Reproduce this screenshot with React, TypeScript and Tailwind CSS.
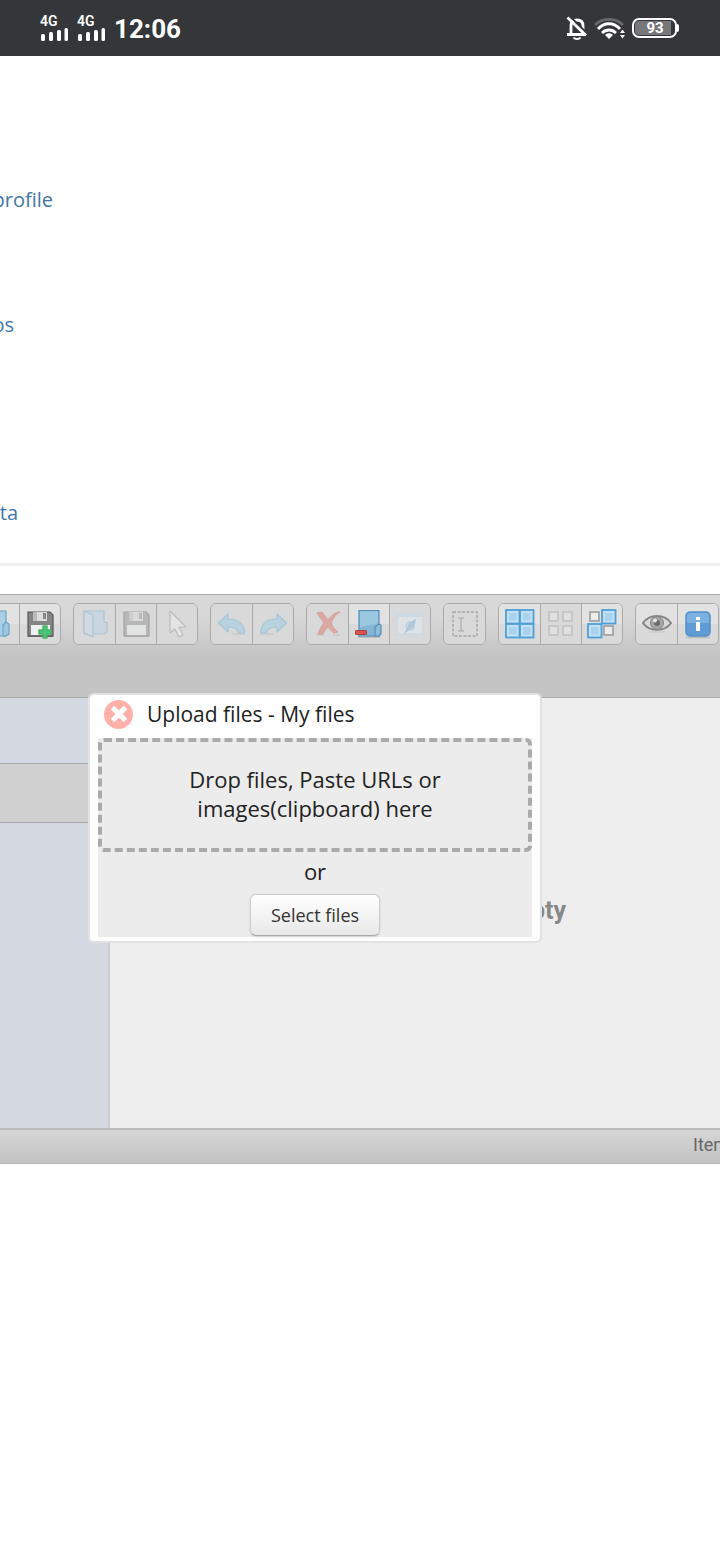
import type { ReactNode } from "react";
import clsx from "clsx";

interface Tool {
  label: string;
  icon: ReactNode;
  disabled?: boolean;
}

const Icon = ({ children }: { children: ReactNode }) => (
  <svg viewBox="0 0 32 32" className="h-8 w-8" fill="none" aria-hidden="true">
    {children}
  </svg>
);

const FolderIcon = () => (
  <Icon>
    <path d="M5 3h20v11l3 1v9l-3 2H5z" fill="#b0d2e8" stroke="#6ea3c6" strokeWidth="1.2" />
    <path d="M5 3l9 4v22l-9-4z" fill="#c0dcee" stroke="#6ea3c6" strokeWidth="1.2" strokeLinejoin="round" />
  </Icon>
);

const FolderEdgeIcon = () => (
  <Icon>
    <path d="M4 3h19v25H4z" fill="#a9cfe6" stroke="#6ba3c8" strokeWidth="1.2" />
    <path d="M20 28V17l3-3 3 2v10l-3 2z" fill="#a0c6df" stroke="#6ba3c8" strokeWidth="1.2" strokeLinejoin="round" />
  </Icon>
);

const FloppyIcon = ({ plus }: { plus?: boolean }) => (
  <Icon>
    <path d="M4 4h22l3 3v21H4z" fill="#858585" stroke="#555" strokeWidth="1.2" />
    <path d="M9 4h14v9H9z" fill="#dcdcdc" />
    <path d="M9 4h4v9H9z" fill="#bbb" />
    <path d="M19 5h3v6h-3z" fill="#888" />
    <path d="M7 17h19v10H7z" fill="#eef1ef" />
    <path d="M4 28.5h25" stroke="#666" strokeWidth="1" />
    {plus && (
      <path
        d="M19 18h4v4h4v4h-4v4h-4v-4h-4v-4h4z"
        fill="#4cc476"
        stroke="#45b56b"
        strokeWidth="1.5"
        strokeLinejoin="round"
      />
    )}
  </Icon>
);

const CursorIcon = () => (
  <Icon>
    <path d="M9 3v22l5-4 4 8 4-2-4-8h7z" fill="#f5f5f5" stroke="#909090" strokeWidth="1.2" strokeLinejoin="round" />
  </Icon>
);

const ArrowIcon = ({ flip }: { flip?: boolean }) => (
  <Icon>
    <g transform={flip ? "translate(32 0) scale(-1 1)" : undefined}>
      <ellipse cx="22" cy="26" rx="7" ry="1.2" fill="#b5b5b5" />
      <path
        d="M2.500 15L12 6v5c9 0 16 4 16.500 14H23c-1-4-5-6-11-6v5z"
        fill="#8bc8ea"
        stroke="#5fa9d4"
        strokeWidth="1.2"
        strokeLinejoin="round"
      />
    </g>
  </Icon>
);

const DeleteIcon = () => (
  <Icon>
    <path d="M4 27h8M21 27h7" stroke="#b0b0b0" strokeWidth="1.5" />
    <path
      d="M5 5l5-1 6 8c3-4 6-7 10-8h2c-5 3-7 7-9 11 2 4 4 7 7 9l-4 1c-3-2-4-4-6-6-3 3-4 5-5 7H6c1-4 3-7 6-11z"
      fill="#df6055"
      stroke="#cf574c"
      strokeWidth="1"
      strokeLinejoin="round"
    />
  </Icon>
);

const EmptyFolderIcon = () => (
  <Icon>
    <path d="M5 29h22" stroke="#b5b5b5" strokeWidth="1.500" />
    <path d="M6 2.500h20v25.500H6z" fill="#86b6d5" stroke="#5590b9" strokeWidth="1.200" />
    <path d="M7 3.500h18v12L7 19z" fill="#9cc7e0" />
    <path d="M22 28V19l4-3 2 1v9l-2 2z" fill="#8fbbd9" stroke="#5590b9" strokeWidth="1.200" strokeLinejoin="round" />
    <rect x="2.500" y="22.500" width="11" height="4" rx="0.500" fill="#d95353" stroke="#a94545" />
  </Icon>
);

const ShortcutIcon = () => (
  <Icon>
    <rect x="3" y="6" width="26" height="20" fill="#e7f1f9" stroke="#c0dbf0" strokeWidth="1.800" />
    <path d="M3 6h26v3H3z" fill="#c0dcf2" />
    <path d="M22 11l-2 8-5 3-5 4 3-6 2-5z" fill="#5fa6da" />
    <circle cx="16" cy="18" r="5" fill="#7db5df" fillOpacity="0.600" />
  </Icon>
);

const SelectIcon = () => (
  <Icon>
    <rect x="4" y="4" width="24" height="24" stroke="#606060" strokeWidth="1.500" strokeDasharray="3 1.500" />
    <path d="M9 10h2l1 1 1-1h2M12 11v11M9 23h2l1-1 1 1h2" stroke="#808080" strokeWidth="1.500" />
  </Icon>
);

// one cell of the 2x2 selection icons
const Tile = ({ x, y, on }: { x: number; y: number; on?: boolean }) =>
  on ? (
    <>
      <rect x={x} y={y} width="13.500" height="13.500" fill="#c3e0f5" stroke="#4f9fd8" strokeWidth="1.800" />
      <rect x={x + 3} y={y + 3} width="7.500" height="7.500" fill="#a9d2f0" />
    </>
  ) : (
    <rect x={x + 2} y={y + 2} width="9" height="9" fill="#ececec" stroke="#a5a5a5" strokeWidth="1.800" />
  );

const TilesIcon = ({ on }: { on: boolean[] }) => (
  <Icon>
    <Tile x={2} y={2} on={on[0]} />
    <Tile x={16} y={2} on={on[1]} />
    <Tile x={2} y={16} on={on[2]} />
    <Tile x={16} y={16} on={on[3]} />
  </Icon>
);

const EyeIcon = () => (
  <Icon>
    <ellipse cx="16" cy="24" rx="9" ry="1" fill="#cecece" />
    <path d="M2 15C8 5.500 24 5.500 30 15 24 24 8 24 2 15z" fill="#dadada" stroke="#858585" strokeWidth="2" />
    <circle cx="16" cy="15" r="6.500" fill="#a5a5a5" stroke="#858585" />
    <circle cx="16" cy="15" r="3" fill="#6a6a6a" />
    <circle cx="14" cy="12.500" r="2" fill="#e5e5e5" />
  </Icon>
);

const InfoIcon = () => (
  <Icon>
    <path d="M4 29.500h24" stroke="#bbb" strokeWidth="1.500" />
    <rect x="4" y="4" width="24" height="24" rx="4" fill="#5f9cd6" stroke="#558fc9" strokeWidth="1.500" />
    <path d="M5 8a3 3 0 013-3h16a3 3 0 013 3v7H5z" fill="#7db1e2" />
    <path d="M14 9h4v3h-4zM14 14h4v9h-4z" fill="#fff" />
  </Icon>
);

const toolGroups: Tool[][] = [
  [
    { label: "Open folder", icon: <FolderEdgeIcon /> },
    { label: "Save as new file", icon: <FloppyIcon plus /> },
  ],
  [
    { label: "Open", icon: <FolderIcon />, disabled: true },
    { label: "Download", icon: <FloppyIcon />, disabled: true },
    { label: "Select item", icon: <CursorIcon />, disabled: true },
  ],
  [
    { label: "Undo", icon: <ArrowIcon />, disabled: true },
    { label: "Redo", icon: <ArrowIcon flip />, disabled: true },
  ],
  [
    { label: "Delete", icon: <DeleteIcon />, disabled: true },
    { label: "Empty the folder", icon: <EmptyFolderIcon /> },
    { label: "Hide", icon: <ShortcutIcon />, disabled: true },
  ],
  [{ label: "Rename", icon: <SelectIcon />, disabled: true }],
  [
    { label: "Select all", icon: <TilesIcon on={[true, true, true, true]} /> },
    { label: "Select none", icon: <TilesIcon on={[false, false, false, false]} />, disabled: true },
    { label: "Invert selection", icon: <TilesIcon on={[false, true, true, false]} /> },
  ],
  [
    { label: "Preview", icon: <EyeIcon /> },
    { label: "Info", icon: <InfoIcon /> },
  ],
];

function Signal() {
  return (
    <div className="flex w-7 flex-col">
      <span className="text-sm leading-3 font-semibold">4G</span>
      <svg viewBox="0 0 28 14" className="h-[14px] w-7" fill="#fff" aria-hidden="true">
        <rect x="1" y="7" width="4" height="7" rx="1.500" />
        <rect x="9" y="5" width="4" height="9" rx="1.500" />
        <rect x="17" y="3" width="4" height="11" rx="1.500" />
        <rect x="24.500" y="1" width="3.500" height="13" rx="1.500" />
      </svg>
    </div>
  );
}

function StatusBar() {
  return (
    <header className="flex h-14 items-center justify-between bg-[#35363a] pr-[41px] pl-10 font-[Roboto,sans-serif] text-white">
      <div className="flex items-center gap-[9px]">
        <Signal />
        <Signal />
        <span className="pt-[2px] text-[26px] leading-8 font-bold">12:06</span>
      </div>
      <div className="flex items-center gap-[6px]">
        <svg viewBox="0 0 22 24" className="h-6 w-[22px]" fill="none" stroke="#fff" strokeWidth="2.800" aria-hidden="true">
          <path d="M5 18V10c0-3.500 2-6 6-6s6 2.500 6 6v8M1 18.500h19" />
          <path d="M7.500 21.500c1.500 2 5.500 2 7 0" strokeWidth="2" />
          <path d="M3.500 0l18 18" stroke="#35363a" strokeWidth="2" />
          <path d="M1.500 1.500l18.500 18" />
        </svg>
        <svg viewBox="0 0 32 24" className="h-6 w-8" fill="none" strokeWidth="2.800" aria-hidden="true">
          <path d="M1 9C8 1.500 22 1.500 29 9" stroke="#68696c" />
          <path d="M4 13c6-7 16-7 22 0M8 17c4-4 10-4 14 0" stroke="#fff" />
          <path d="M11 19c2-2.500 6-2.500 8 0l-4 4z" fill="#fff" />
          <path d="M26 17l2.500-3.500L31 17zM26 19l2.500 3.500L31 19z" fill="#fff" />
        </svg>
        <div className="flex items-center">
          <div className="flex h-5 w-[45px] rounded-[7px] border-2 border-white p-px">
            <span className="w-[36px] rounded-l-sm bg-[#77777a] pl-1 text-center text-[15px] leading-[15px] font-bold">93</span>
          </div>
          <span className="h-2 w-[2px] rounded-r bg-white" />
        </div>
      </div>
    </header>
  );
}

function SideLink({ children, className }: { children: string; className: string }) {
  return (
    <a href="#" className={clsx("flex h-7 justify-end text-xl leading-7 text-[#3f78a8]", className)}>
      {children}
    </a>
  );
}

function Toolbar() {
  return (
    <div className="h-[104px] border-y border-[#aaa] bg-linear-to-b from-[#d8d8d8] from-20% to-[#c4c4c4] to-60% pt-2">
      <div className="-ml-[23px] flex gap-3" role="toolbar" aria-label="File actions">
        {toolGroups.map((group, i) => (
          <div key={i} className="flex h-[42px] shrink-0 overflow-hidden rounded-md border border-[#aaa]">
            {group.map((tool) => (
              <button
                key={tool.label}
                type="button"
                aria-label={tool.label}
                disabled={tool.disabled}
                className={clsx(
                  "flex w-[41px] items-center justify-center border-l border-[#aaa] first:border-l-transparent",
                  tool.disabled ? "bg-[#d9d9d9]" : "bg-linear-to-b from-[#e2e2e2] from-50% to-[#dadada] to-50%"
                )}
              >
                <span className={tool.disabled ? "opacity-40" : undefined}>{tool.icon}</span>
              </button>
            ))}
          </div>
        ))}
      </div>
    </div>
  );
}

function UploadDialog() {
  return (
    <section
      role="dialog"
      aria-labelledby="upload-title"
      className="absolute -top-[5px] left-[88px] w-[454px] rounded-md border-2 border-[#e2e2e2] bg-white px-2 pb-1 font-['Open_Sans',sans-serif] text-[#222]"
    >
      <div className="flex h-[43px] items-center gap-[14px] pb-[5px] pl-[6px]">
        <button type="button" aria-label="Close" className="flex h-[29px] w-[29px] items-center justify-center rounded-full bg-[#ffb0a9]">
          <svg viewBox="0 0 16 16" className="h-4 w-4" stroke="#fff" strokeWidth="5" aria-hidden="true">
            <path d="M1.500 1.500l13 13M14.500 1.500l-13 13" />
          </svg>
        </button>
        <h2 id="upload-title" className="text-[21px] leading-7">
          Upload files - My files
        </h2>
      </div>
      <div className="flex flex-col items-center bg-[#ececec]">
        <div className="flex h-[114px] w-full items-center justify-center rounded-md border-4 border-dashed border-[#aaa] px-16 pb-[2px]">
          <p className="text-center text-[22px] leading-[29px]">Drop files, Paste URLs or images(clipboard) here</p>
        </div>
        <p className="pt-[5px] pb-2 text-[22px] leading-[29px]">or</p>
        <button
          type="button"
          className="h-[42px] w-[130px] rounded-md border border-[#ccc] border-b-[#aaa] bg-linear-to-b from-white to-[#e8e8e8] text-lg text-[#333] shadow-sm"
        >
          Select files
        </button>
        <span className="h-px" />
      </div>
    </section>
  );
}

export default function App() {
  return (
    <div className="min-h-screen overflow-hidden bg-white">
      <StatusBar />
      <nav className="border-b-[3px] border-[#f0f0f0] pt-[130px] pb-9 font-['Open_Sans',sans-serif]">
        <SideLink className="w-[53px]">profile</SideLink>
        <SideLink className="mt-[97px] w-[14px]">os</SideLink>
        <SideLink className="mt-[160px] w-[18px]">ta</SideLink>
      </nav>

      <main className="mt-7 font-[Roboto,sans-serif]">
        <Toolbar />
        <div className="relative flex h-[430px]">
          <aside className="w-[110px] shrink-0 border-r-2 border-[#ccc] bg-[#d3d8e1] pt-[65px]">
            <div className="h-[60px] border-y border-[#aaa] bg-[#d0d0d0]" />
          </aside>
          <div className="flex-1 bg-[#eee] pt-[197px]">
            <p className="w-[456px] text-right text-[25px] leading-8 font-bold text-[#888]">Empty</p>
          </div>
          <UploadDialog />
        </div>
        <footer className="flex h-9 justify-end overflow-hidden border-t-2 border-b border-[#bbb] bg-linear-to-b from-[#d6d6d6] to-[#c2c2c2]">
          <span className="w-[27px] text-lg leading-[30px] whitespace-nowrap text-[#666]">Items</span>
        </footer>
      </main>
    </div>
  );
}
